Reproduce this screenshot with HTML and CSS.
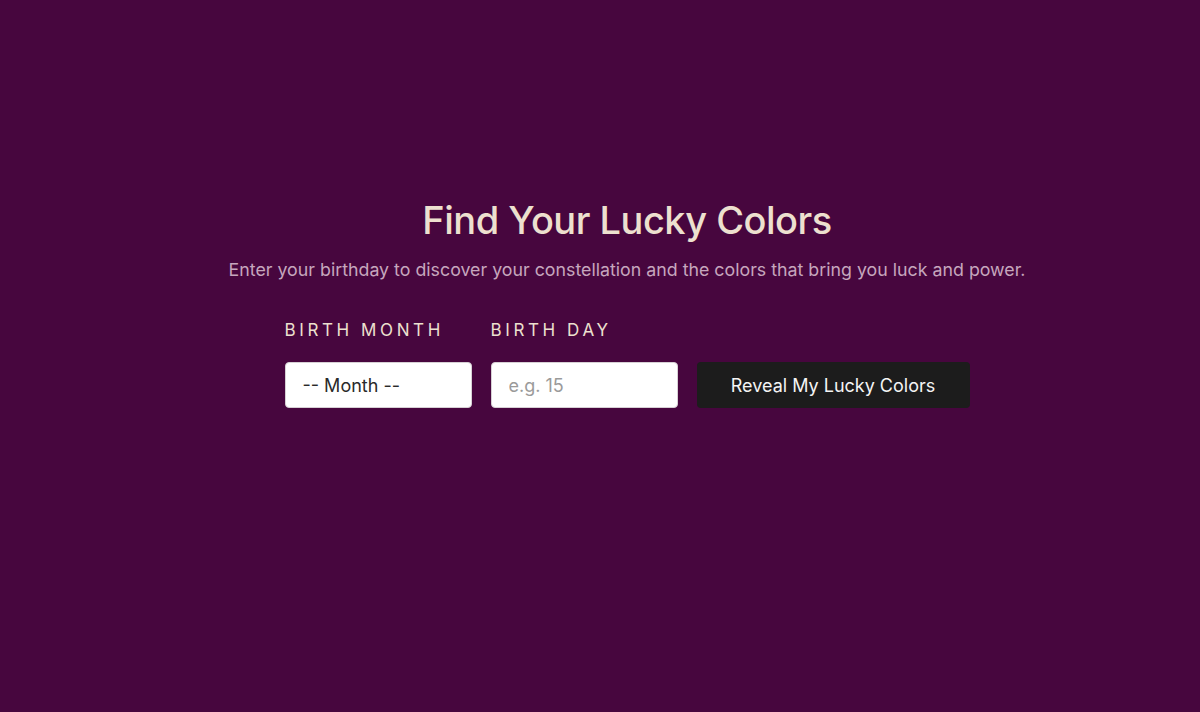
FILE: index.html
```html
<!DOCTYPE html>
<html lang="en">
<head>
<meta charset="utf-8">
<title>Find Your Lucky Colors</title>
<link rel="stylesheet" href="styles.css">
</head>
<body>
<main class="page">
  <section class="hero">
    <h1 class="title">Find Your Lucky Colors</h1>
    <p class="subtitle">Enter your birthday to discover your constellation and the colors that bring you luck and power.</p>
    <form class="form">
      <div class="field">
        <label class="label" for="month">Birth Month</label>
        <div class="select" id="month">-- Month --</div>
      </div>
      <div class="field">
        <label class="label" for="day">Birth Day</label>
        <input class="input" id="day" type="text" placeholder="e.g. 15">
      </div>
      <button class="button" type="button">Reveal My Lucky Colors</button>
    </form>
  </section>
</main>
</body>
</html>
```
FILE: styles.css
```css
* { box-sizing: border-box; }
html, body { margin: 0; height: 100%; }
body {
  background: #47063e;
  font-family: Inter, "Noto Sans", sans-serif;
}
.page {
  min-height: 712px;
  display: flex;
  justify-content: center;
  padding-left: 54px;
  padding-top: 200px;
}
.hero {
  display: flex;
  flex-direction: column;
  align-items: center;
}
.title {
  margin: 0;
  font-size: 38px;
  font-weight: 500;
  color: #ede0cf;
  letter-spacing: -0.5px;
  line-height: 40px;
}
.subtitle {
  margin: 18px 0 0;
  font-size: 17.8px;
  color: #c6a6bd;
  line-height: 24px;
}
.form {
  margin-top: 37px;
  display: flex;
  align-items: flex-end;
  gap: 19px;
}
.field {
  display: flex;
  flex-direction: column;
  gap: 21px;
}
.label {
  font-size: 17px;
  font-weight: 400;
  color: #ede0cf;
  letter-spacing: 3.6px;
  text-transform: uppercase;
  line-height: 22px;
}
.select, .input {
  width: 187px;
  height: 46px;
  border: 1px solid #d6d0d4;
  border-radius: 4px;
  background: #fff;
  padding: 0 17px;
  font-family: inherit;
  font-size: 18px;
  color: #2a2a2a;
  display: flex;
  align-items: center;
}
.input::placeholder { color: #9a9a9a; }
.button {
  width: 273px;
  height: 46px;
  border: none;
  border-radius: 4px;
  background: #1c1c1c;
  color: #f4f4f4;
  font-family: inherit;
  font-size: 18px;
}
```
